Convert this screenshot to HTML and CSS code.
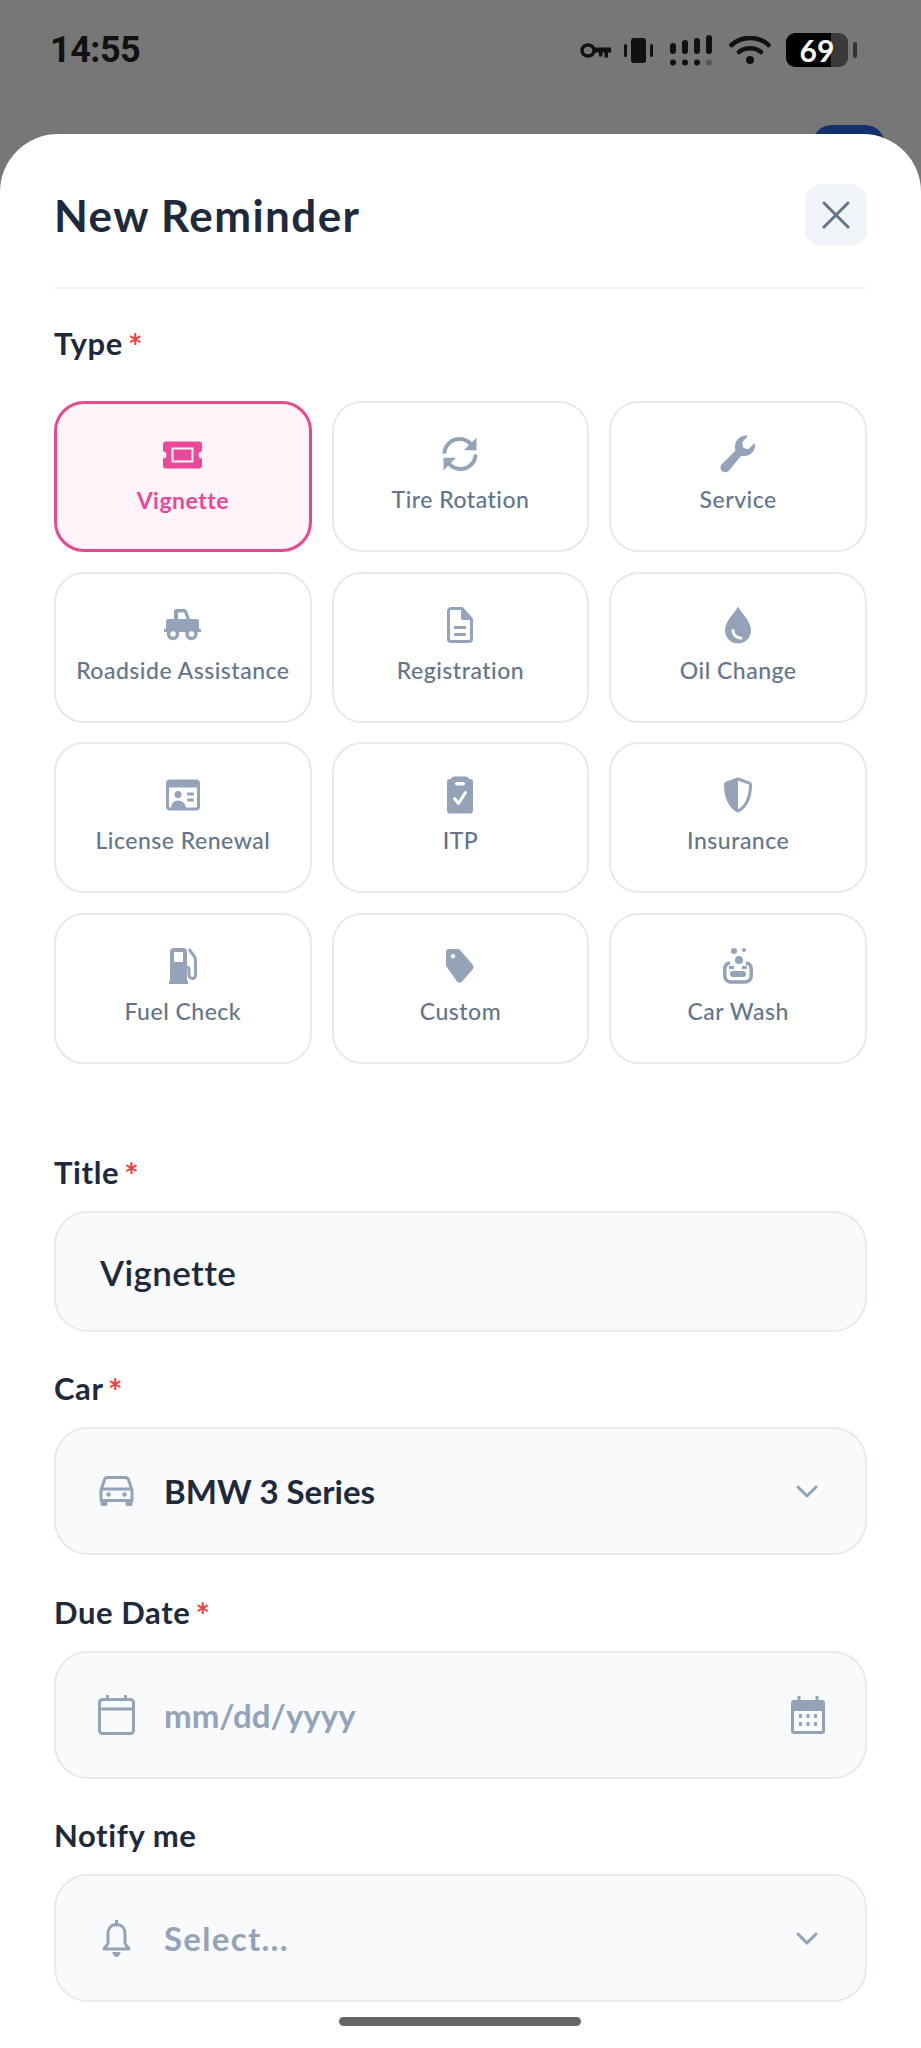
FILE: index.html
```html
<!DOCTYPE html>
<html lang="en">
<head>
    <meta charset="UTF-8">
    <meta name="viewport" content="width=device-width, initial-scale=1.0">
    <title>New Reminder</title>
    <link rel="stylesheet" href="styles.css">
</head>
<body>
    <div class="status-bar">
        <span class="time">14:55</span>
        <div class="status-icons">
            <svg class="key-icon" width="31" height="15" viewBox="0 0 31 15"><ellipse cx="8" cy="7.500" rx="6" ry="5.500" fill="none" stroke="#111" stroke-width="3.500"/><path d="M13 4.500h18v5h-3v5h-3.500v-5h-2v4h-3.500v-4H13z" fill="#111"/></svg>
            <svg width="29" height="25" viewBox="0 0 29 25"><rect x="7" y="0" width="15" height="25" rx="3" fill="#111"/><rect x="0" y="6" width="3" height="13" rx="1.500" fill="#111"/><rect x="26" y="6" width="3" height="13" rx="1.500" fill="#111"/></svg>
            <svg width="42" height="31" viewBox="0 0 42 31"><g fill="#111"><rect x="0" y="8" width="6" height="11" rx="3"/><rect x="12" y="5" width="6" height="14" rx="3"/><rect x="24" y="3" width="6" height="16" rx="3"/><rect x="36" y="0" width="6" height="19" rx="3"/><circle cx="3" cy="27.500" r="3"/><circle cx="15" cy="27.500" r="3"/><circle cx="27" cy="27.500" r="3"/></g><circle cx="39" cy="27.500" r="3" fill="#555"/></svg>
            <svg width="42" height="28" viewBox="0 0 42 28"><g fill="none" stroke="#111" stroke-width="4.500" stroke-linecap="round"><path d="M2.500 9C13-.5 29-.5 39.500 9"/><path d="M10 16c6.500-5 15.500-5 22 0"/></g><circle cx="21" cy="24" r="4" fill="#111"/></svg>
            <div class="battery">
                <div class="battery-body"><span>69</span></div>
                <div class="battery-nub"></div>
            </div>
        </div>
        <div class="peek-button"></div>
    </div>

    <div class="sheet">
        <div class="sheet-header">
            <h1>New Reminder</h1>
            <button class="close-btn">
                <svg width="28" height="28" viewBox="0 0 28 28"><path d="M2 2l24 24M26 2L2 26" fill="none" stroke="#64748b" stroke-width="3" stroke-linecap="round"/></svg>
            </button>
        </div>

        <div class="label type-label">Type <span class="req">*</span></div>
        <div class="type-grid">
            <div class="type-card selected">
                <svg class="type-icon" width="41" height="27" viewBox="0 0 41 27"><path fill-rule="evenodd" d="M4 0h33a3 3 0 0 1 3 3v7a3.500 3.500 0 0 0 0 7v7a3 3 0 0 1-3 3H4a3 3 0 0 1-3-3v-7a3.500 3.500 0 0 0 0-7V3a3 3 0 0 1 3-3zm5.500 6v15h22V6z" fill="#ec4899"/><rect x="11.500" y="8" width="18" height="11" fill="#ec4899"/></svg>
                <span>Vignette</span>
            </div>
            <div class="type-card">
                <svg class="type-icon" width="36" height="36" viewBox="0 0 36 36"><g fill="none" stroke="#94a3b8" stroke-width="4" stroke-linecap="round" stroke-linejoin="round"><path d="M2.500 16C3.500 8.500 10 3 17.500 3c5 0 9.500 2.500 12.500 6.500"/><path d="M33.500 20c-1 7.500-7.500 13-15 13-5 0-9.500-2.500-12.500-6.500"/></g><path d="M34.500 1.500v12.700H22z" fill="#94a3b8"/><path d="M1.500 34.500V21.800H14z" fill="#94a3b8"/></svg>
                <span>Tire Rotation</span>
            </div>
            <div class="type-card">
                <svg class="type-icon" width="38" height="37" viewBox="0 0 38 37"><path d="M36 10c0 6-5 10.500-10.500 10.500-1 0-2-.1-3-.5L10 35a4.800 4.800 0 0 1-7.500-6L16.500 15c-.4-1.200-.6-2.500-.6-3.700C15.900 5 21 0 27 0c.8 0 1.500.1 2 .3l-6 7 1.500 5.200 5 1.300 6-6.300c.3.700.5 1.500.5 2.500z" fill="#94a3b8"/></svg>
                <span>Service</span>
            </div>
            <div class="type-card">
                <svg class="type-icon" width="37" height="32" viewBox="0 0 37 32"><path fill-rule="evenodd" d="M12 0h8c1.500 0 2.500.8 3 2l3 8h7a2 2 0 0 1 2 2v8h2v3h-5a6 6 0 0 0-11 0h-5a6 6 0 0 0-11 0H0v-3h2v-8a2 2 0 0 1 2-2h6V3c0-1.700.8-3 2-3zm2 3.500V10h8.500l-2.300-6.500z" fill="#94a3b8"/><path d="M3 15h30v8H3z" fill="#94a3b8"/><g fill="#fff" stroke="#94a3b8" stroke-width="3.500"><circle cx="9" cy="25" r="4.500"/><circle cx="27.500" cy="25" r="4.500"/></g></svg>
                <span>Roadside Assistance</span>
            </div>
            <div class="type-card">
                <svg class="type-icon" width="26" height="36" viewBox="0 0 26 36"><g fill="none" stroke="#94a3b8" stroke-width="3" stroke-linejoin="round"><path d="M4 1.500h11L24.500 12v20a2.500 2.500 0 0 1-2.500 2.500H4A2.500 2.500 0 0 1 1.500 32V4A2.500 2.500 0 0 1 4 1.500z"/></g><path d="M14 2v9a2 2 0 0 0 2 2h8z" fill="#94a3b8"/><rect x="7" y="19" width="12" height="3" rx="1" fill="#94a3b8"/><rect x="7" y="26" width="12" height="3" rx="1" fill="#94a3b8"/></svg>
                <span>Registration</span>
            </div>
            <div class="type-card">
                <svg class="type-icon" width="26" height="37" viewBox="0 0 26 37"><path d="M13 0c2 5 13 14 13 24a13 13 0 0 1-26 0C0 14 11 5 13 0z" fill="#94a3b8"/><path d="M8 24c0 4 3 7.500 8 7.500" fill="none" stroke="#fff" stroke-width="3" stroke-linecap="round"/></svg>
                <span>Oil Change</span>
            </div>
            <div class="type-card">
                <svg class="type-icon" width="34" height="31" viewBox="0 0 34 31"><rect x="1.500" y="1.500" width="31" height="28" rx="2.500" fill="none" stroke="#94a3b8" stroke-width="3"/><rect x="1" y="1" width="32" height="7" rx="2" fill="#94a3b8"/><circle cx="12" cy="15" r="3.500" fill="#94a3b8"/><path d="M5 29c0-5 3-8 7-8s8 3 8 8z" fill="#94a3b8"/><rect x="21" y="13" width="7" height="3" rx="1" fill="#94a3b8"/><rect x="21" y="19" width="7" height="3" rx="1" fill="#94a3b8"/></svg>
                <span>License Renewal</span>
            </div>
            <div class="type-card">
                <svg class="type-icon" width="26" height="37" viewBox="0 0 26 37"><path d="M7 0h12a3 3 0 0 1 3 2.500h1a3 3 0 0 1 3 3V34a3 3 0 0 1-3 3H3a3 3 0 0 1-3-3V5.500a3 3 0 0 1 3-3h1A3 3 0 0 1 7 0z" fill="#94a3b8"/><rect x="8" y="5.500" width="10" height="3.500" rx="1.700" fill="#fff"/><path d="M7.500 22l4 5 7-11" fill="none" stroke="#fff" stroke-width="3" stroke-linecap="round" stroke-linejoin="round"/></svg>
                <span>ITP</span>
            </div>
            <div class="type-card">
                <svg class="type-icon" width="28" height="36" viewBox="0 0 28 36"><path d="M14 2l11.500 4.200c1 .4 1 1.200 1 2C26.500 20 22 30 14 34 6 30 1.500 20 1.500 8.200c0-.8 0-1.600 1-2z" fill="none" stroke="#94a3b8" stroke-width="3" stroke-linejoin="round"/><path d="M14 2L2.500 6.200c-1 .4-1 1.200-1 2C1.500 20 6 30 14 34z" fill="#94a3b8"/></svg>
                <span>Insurance</span>
            </div>
            <div class="type-card">
                <svg class="type-icon" width="28" height="36" viewBox="0 0 28 36"><path fill-rule="evenodd" d="M5 0h9a4 4 0 0 1 4 4v29h1v3H0v-3h1V4a4 4 0 0 1 4-4zm0 4v10h9V4z" fill="#94a3b8"/><path d="M20 1l5 7c1.200 1.500 1.500 2.500 1.500 4v15c0 2-1 3.500-3 3.500S20 29 20 27v-5c0-2-1-3-3-3" fill="none" stroke="#94a3b8" stroke-width="3"/></svg>
                <span>Fuel Check</span>
            </div>
            <div class="type-card">
                <svg class="type-icon" width="28" height="34" viewBox="0 0 28 34"><path fill-rule="evenodd" d="M3 0h8c1.500 0 2.500.5 3.500 1.500l12 14c1.300 1.500 1.300 3.500 0 5L16 32.500c-1.400 1.500-3.500 1.500-5 0L1.500 19C.5 18 0 17 0 15.500V3a3 3 0 0 1 3-3zm4 5a2.200 2.200 0 1 0 0 4.400A2.200 2.200 0 0 0 7 5z" fill="#94a3b8"/></svg>
                <span>Custom</span>
            </div>
            <div class="type-card">
                <svg class="type-icon" width="30" height="36" viewBox="0 0 30 36"><circle cx="11" cy="3" r="3" fill="#94a3b8"/><circle cx="21" cy="2" r="2" fill="#94a3b8"/><circle cx="16" cy="12" r="4" fill="#94a3b8"/><path d="M7 15c-3.500.5-5.200 3-5.200 6v7a6 6 0 0 0 6 6h14.400a6 6 0 0 0 6-6v-7c0-3-1.700-5.500-5.200-6" fill="none" stroke="#94a3b8" stroke-width="3.500"/><path d="M6 19.500h5M19 19.500h5" stroke="#94a3b8" stroke-width="3"/><rect x="7" y="23" width="16" height="6" rx="3" fill="#94a3b8"/></svg>
                <span>Car Wash</span>
            </div>
        </div>

        <div class="form">
            <div class="field">
                <div class="label">Title <span class="req">*</span></div>
                <div class="input title-input">Vignette</div>
            </div>
            <div class="field">
                <div class="label">Car <span class="req">*</span></div>
                <div class="input select">
                    <svg class="lead-icon" width="34" height="30" viewBox="0 0 34 30"><path d="M8 1.500h18c1.500 0 2.500.8 3 2.200L32.500 14v10.500h-31V14L5 3.700c.5-1.400 1.500-2.200 3-2.200z" fill="none" stroke="#94a3b8" stroke-width="3" stroke-linejoin="round"/><path d="M2 13h30" stroke="#94a3b8" stroke-width="3"/><circle cx="9" cy="18.500" r="2.300" fill="#94a3b8"/><circle cx="25" cy="18.500" r="2.300" fill="#94a3b8"/><rect x="1" y="23" width="7" height="7" rx="1.500" fill="#94a3b8"/><rect x="26" y="23" width="7" height="7" rx="1.500" fill="#94a3b8"/></svg>
                    <span class="value">BMW 3 Series</span>
                    <svg class="chevron" width="22" height="13" viewBox="0 0 22 13"><path d="M2 2l9 9 9-9" fill="none" stroke="#94a3b8" stroke-width="3" stroke-linecap="round" stroke-linejoin="round"/></svg>
                </div>
            </div>
            <div class="field">
                <div class="label">Due Date <span class="req">*</span></div>
                <div class="input select">
                    <svg class="lead-icon" width="37" height="40" viewBox="0 0 37 40"><rect x="1.500" y="4.500" width="34" height="34" rx="3" fill="none" stroke="#94a3b8" stroke-width="3"/><path d="M2 14h33M9.500 0v6M27.500 0v6" stroke="#94a3b8" stroke-width="3"/></svg>
                    <span class="value placeholder">mm/dd/yyyy</span>
                    <svg class="cal-icon" width="34" height="38" viewBox="0 0 34 38"><path d="M3 4h28a3 3 0 0 1 3 3v28a3 3 0 0 1-3 3H3a3 3 0 0 1-3-3V7a3 3 0 0 1 3-3z" fill="#94a3b8"/><path d="M8 0v6M26 0v6" stroke="#94a3b8" stroke-width="3"/><rect x="3" y="15" width="28" height="20" fill="#f8fafc"/><g fill="#94a3b8"><rect x="8" y="18" width="3" height="4"/><rect x="15.500" y="18" width="3" height="4"/><rect x="23" y="18" width="3" height="4"/><rect x="8" y="26" width="3" height="4"/><rect x="15.500" y="26" width="3" height="4"/><rect x="23" y="26" width="3" height="4"/></g></svg>
                </div>
            </div>
            <div class="field">
                <div class="label">Notify me</div>
                <div class="input select">
                    <svg class="lead-icon" width="28" height="37" viewBox="0 0 28 37"><path d="M14 4.500c5.500 0 8.500 4 8.500 9.500v9c0 2 2.500 3 4 6H1.500c1.500-3 4-4 4-6v-9c0-5.500 3-9.500 8.500-9.500z" fill="none" stroke="#94a3b8" stroke-width="3" stroke-linejoin="round"/><path d="M14 0v5" stroke="#94a3b8" stroke-width="3" stroke-linecap="round"/><path d="M10 32h8c0 2.500-2 5-4 5s-4-2.500-4-5z" fill="#94a3b8"/></svg>
                    <span class="value placeholder notify-value">Select...</span>
                    <svg class="chevron" width="22" height="13" viewBox="0 0 22 13"><path d="M2 2l9 9 9-9" fill="none" stroke="#94a3b8" stroke-width="3" stroke-linecap="round" stroke-linejoin="round"/></svg>
                </div>
            </div>
        </div>
    </div>

    <div class="home-indicator"></div>
</body>
</html>
```

FILE: styles.css
```css
* {
    box-sizing: border-box;
}
body {
    margin: 0;
    height: 2048px;
    overflow: hidden;
    background: #777;
    font-family: "Lato", "Liberation Sans", sans-serif;
    color: #1e293b;
    position: relative;
}
.status-bar {
    height: 134px;
    padding: 33px 64px 0 50px;
    display: flex;
    justify-content: space-between;
    align-items: flex-start;
    position: relative;
}
.time {
    font-family: "Roboto", sans-serif;
    font-weight: 700;
    font-size: 36px;
    line-height: 34px;
    letter-spacing: -0.5px;
    color: #111;
}
.status-icons {
    display: flex;
    align-items: center;
    gap: 17px;
    height: 34px;
}
.key-icon {
    margin-right: -4px;
}
.battery {
    display: flex;
    align-items: center;
    gap: 5px;
    margin-left: -2px;
}
.battery-body {
    width: 62px;
    height: 34px;
    border-radius: 9px;
    background: linear-gradient(90deg, #000 73%, #3a3a3a 73%);
    color: #fff;
    font-family: "Lato", sans-serif;
    font-weight: 700;
    font-size: 30px;
    line-height: 34px;
    text-align: center;
}
.battery-nub {
    width: 4px;
    height: 16px;
    border-radius: 2px;
    background: #333;
}
.peek-button {
    position: absolute;
    left: 812px;
    top: 125px;
    width: 73px;
    height: 40px;
    border-radius: 24px;
    background: #14306f;
}
.sheet {
    position: relative;
    height: 1914px;
    padding: 50px 54px 0 54px;
    background: #fff;
    border-radius: 58px 58px 0 0;
}
.sheet-header {
    display: flex;
    justify-content: space-between;
    align-items: center;
    padding-bottom: 41px;
    border-bottom: 2px solid #f1f5f9;
}
.sheet-header h1 {
    margin: 0;
    font-size: 44px;
    font-weight: 700;
    letter-spacing: 1.4px;
    color: #1e293b;
}
.close-btn {
    width: 62px;
    height: 62px;
    border: none;
    border-radius: 16px;
    background: #f1f5f9;
    padding: 0;
    display: flex;
    align-items: center;
    justify-content: center;
}
.label {
    height: 40px;
    font-size: 31px;
    line-height: 40px;
    font-weight: 700;
    letter-spacing: 0.6px;
    color: #1e293b;
}
.req {
    color: #ef4444;
    font-size: 34px;
    margin-left: -3px;
    vertical-align: -4px;
    line-height: 1;
}
.type-label {
    margin-top: 34px;
}
.type-grid {
    margin-top: 38.300px;
    display: grid;
    grid-template-columns: repeat(3, 1fr);
    grid-auto-rows: 151px;
    gap: 19.500px 20px;
}
.type-card {
    border: 2.600px solid #e5eaf0;
    border-radius: 30px;
    background: #fff;
    display: flex;
    flex-direction: column;
    align-items: center;
    padding-top: 31px;
    font-size: 23px;
    font-weight: 500;
    letter-spacing: 0.5px;
    color: #64748b;
}
.type-card .type-icon {
    height: 40px;
    margin-bottom: 10px;
}
.type-card span {
    line-height: 30px;
}
.type-card.selected {
    border: 3.500px solid #e8488f;
    background: #fef4fa;
    color: #ec4899;
    font-weight: 700;
}
.form {
    margin-top: 88.700px;
    display: flex;
    flex-direction: column;
    gap: 36.500px;
}
.input {
    margin-top: 19px;
    height: 128px;
    border: 2.600px solid #e5eaf0;
    border-radius: 34px;
    background: #f8fafc;
    display: flex;
    align-items: center;
    font-size: 33px;
    font-weight: 700;
    color: #1e293b;
}
.title-input {
    height: 120.500px;
    padding-left: 44px;
    font-size: 35px;
    font-weight: 600;
    letter-spacing: 0.4px;
}
.select {
    padding: 0 40px 0 42px;
}
.lead-icon {
    width: 37px;
    flex: none;
}
.value {
    margin-left: 29px;
    flex: 1;
}
.placeholder {
    color: #94a3b8;
}
.notify-value {
    letter-spacing: 1.3px;
}
.chevron {
    margin-right: 7px;
}
.home-indicator {
    position: absolute;
    left: 339px;
    top: 2017px;
    width: 242px;
    height: 9px;
    border-radius: 5px;
    background: #666;
}
```
